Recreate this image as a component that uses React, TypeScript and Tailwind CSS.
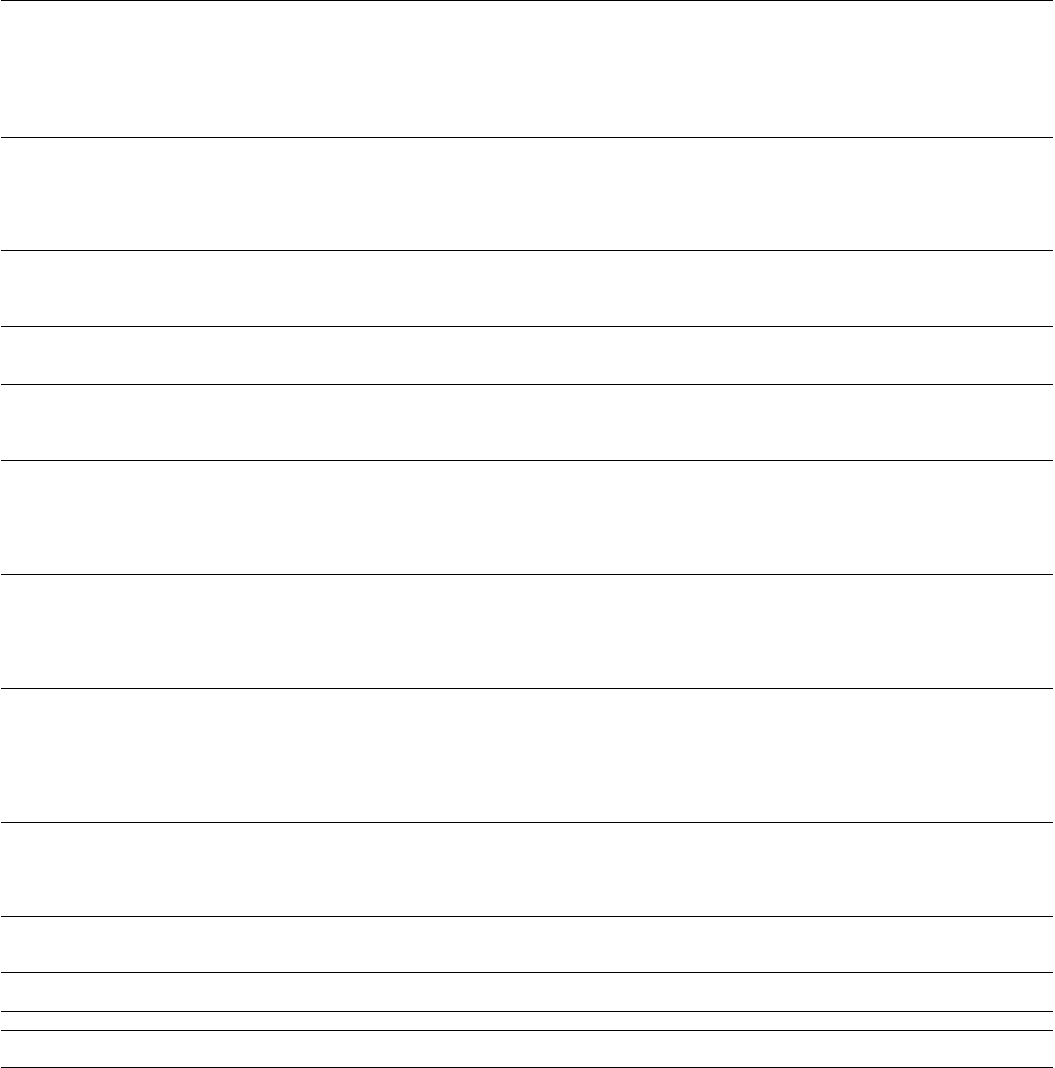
import React from "react";

const rows = [137, 113, 76, 58, 76, 114, 114, 134, 94, 56, 39, 19, 37];

export default function App() {
  return (
    <div className="min-h-screen bg-white">
      <div className="ml-[1px] flex w-[1052px] flex-col border-b border-black">
        {rows.map((h, i) => (
          <div key={i} className="border-t border-black" style={{ height: h }} />
        ))}
      </div>
    </div>
  );
}
